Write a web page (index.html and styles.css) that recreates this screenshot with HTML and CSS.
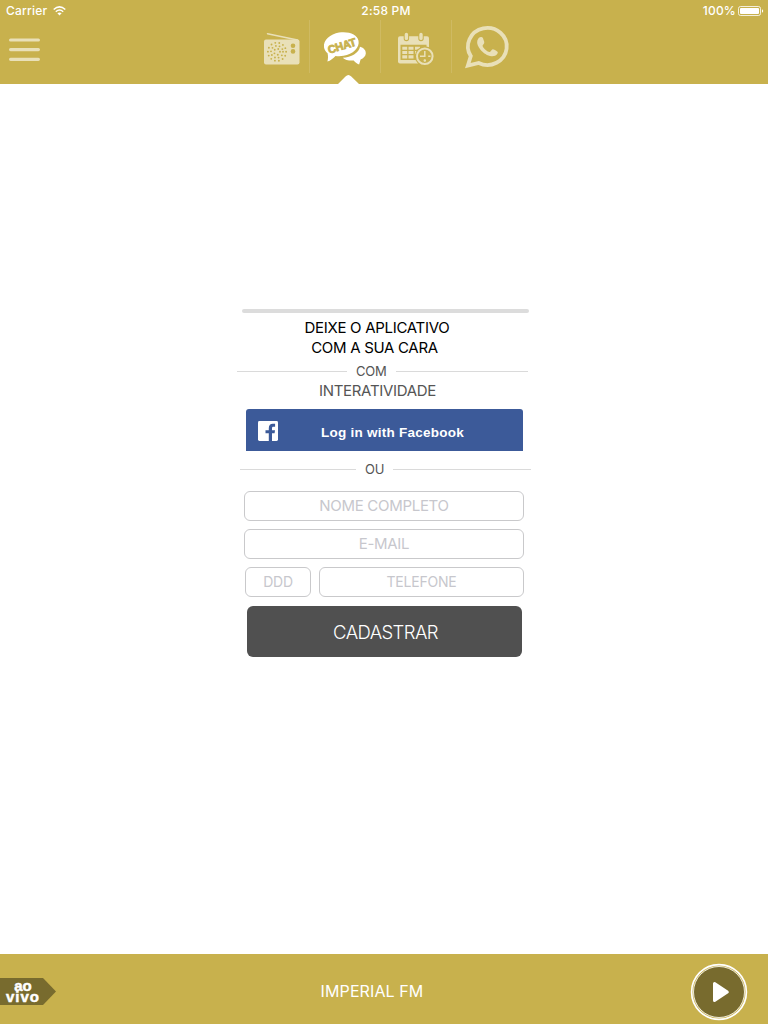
FILE: index.html
```
<!DOCTYPE html>
<html lang="pt-BR">
  <head>
    <meta charset="UTF-8" />
    <meta name="viewport" content="width=device-width, initial-scale=1.0" />
    <title>Imperial FM</title>
    <link rel="stylesheet" href="styles.css">
  </head>
  <body>
    <header class="header">
      <div class="status-bar">
        <div class="status-left">
          <span class="carrier">Carrier</span>
          <svg class="wifi" width="13" height="10" viewBox="0 0 13 10">
            <path d="M.7 3.5Q6.5-1.8 12.3 3.5M2.8 5.7Q6.5 2.4 10.2 5.7" fill="none" stroke="#fff" stroke-width="1.5" />
            <path d="M4.4 7.3Q6.5 5.5 8.6 7.3L6.5 9.4Z" fill="#fff" />
          </svg>
        </div>
        <span class="clock">2:58 PM</span>
        <div class="status-right">
          <span class="percent">100%</span>
          <svg width="26" height="10" viewBox="0 0 26 10">
            <rect x=".5" y=".5" width="22" height="9" rx="2" fill="none" stroke="#fff" stroke-opacity=".8" />
            <rect x="2" y="2" width="19" height="6" rx="1" fill="#fff" />
            <path d="M24 3.2q1.2.5 1.2 1.8t-1.2 1.8z" fill="#fff" />
          </svg>
        </div>
      </div>
      <div class="nav">
        <button class="menu" aria-label="Menu">
          <svg width="31" height="24" viewBox="0 0 31 24">
            <path d="M1.6 2h27.8M1.6 11.6h27.8M1.6 21.3h27.8" stroke="#e9e0b8" stroke-width="3.2" stroke-linecap="round" />
          </svg>
        </button>
        <nav class="tabs">
          <a class="tab" href="#">
            <svg width="70" height="64" viewBox="0 0 70 64">
              <path d="M28.5 13.7L58.5 20" stroke="#e9e0b8" stroke-width="1.5" stroke-linecap="round" />
              <rect x="25" y="19.5" width="35.5" height="25" rx="2" fill="#e9e0b8" />
              <g fill="none" stroke="#c8b14d" stroke-width="1.9" stroke-linecap="round">
                <circle cx="38" cy="31.8" r="3" stroke-dasharray="0 3.77" />
                <circle cx="38" cy="31.8" r="6" stroke-dasharray="0 3.77" />
                <circle cx="38" cy="31.8" r="9.1" stroke-dasharray="0 4.084" />
              </g>
              <g fill="#c8b14d">
                <circle cx="54" cy="25.7" r="2.3" />
                <circle cx="54" cy="31.4" r="2.3" />
              </g>
            </svg>
          </a>
          <a class="tab active" href="#">
            <svg width="70" height="64" viewBox="0 0 70 64">
              <path d="M50 26.7c3.9 1 6 3.8 5.8 6.8-.2 2.8-2.3 4.9-5.2 5.9-.6 1.7-.8 3-1.5 5-2.4-.7-4-2.1-5.4-3.9-4.8.3-8.7-.6-11-2.8 8.4-.4 16.3-4.8 17.3-11z" fill="#fff" />
              <path d="M29 12.6c9.9-1.5 18.3 1.9 19.5 8.1 1.4 6.9-5.5 13.4-15 15.1-3 .5-5.5.5-8 .1-2.3 2.4-4.9 4.6-8.1 5.7.8-3.2.8-5.3.2-8.4-2-1.5-3.2-3.6-3.6-6-.9-6.9 6.3-13.2 15-14.6z" fill="#fff" />
              <text class="chat-word" x="31.6" y="29.8" text-anchor="middle" textLength="29" lengthAdjust="spacing" transform="rotate(-17 31.6 24.6)">CHAT</text>
              <path d="M28 64L35.5 56.6Q38.4 53.4 41.3 56.6L49 64z" fill="#fff" />
            </svg>
          </a>
          <a class="tab" href="#">
            <svg width="70" height="64" viewBox="0 0 70 64">
              <rect x="17" y="16.2" width="31" height="27.3" rx="2" fill="#e9e0b8" />
              <path d="M19.500 24.800h26V38q0 2-2 2h-24z" fill="#c8b14d" />
              <g stroke-linecap="round">
                <path d="M25.4 15v3.5M40 15v3.5" stroke="#c8b14d" stroke-width="5.4" />
                <path d="M25.4 14.4v4M40 14.4v4" stroke="#e9e0b8" stroke-width="3.4" />
              </g>
              <path d="M21.3 26.7h4.9v3.1h-4.9zM27.5 26.7h5v3.1h-5zM34 26.7h5v3.1h-5zM21.3 31h4.9v3.1h-4.9zM27.5 31h5v3.1h-5zM34 31h4v3.1h-4zM21.3 35.3h4.9v3.1h-4.9zM27.5 35.3h5v3.1h-5z" fill="#e9e0b8" />
              <circle cx="43.8" cy="36.2" r="10" fill="#c8b14d" />
              <circle cx="43.8" cy="36.2" r="7.8" fill="#c8b14d" stroke="#e9e0b8" stroke-width="2" />
              <path d="M43.8 31v5.2H39M43.8 39.3v2.4M42.6 40.5h2.4M47.2 36.2h2.3" fill="none" stroke="#e9e0b8" stroke-width="1.5" />
            </svg>
          </a>
          <a class="tab" href="#">
            <svg width="70" height="64" viewBox="0 0 70 64">
              <path d="M15.8 45.7l3-9.6A19.4 18.5 0 1 1 26.7 43z" fill="none" stroke="#e9e0b8" stroke-width="3.8" />
              <path d="M25.3 20.8c.7-2.1 2-3.8 4-3.7 1.4.1 1.7 1.2 2.2 2.6.5 1.3 1.1 2.5.6 3.5-.4 1-1.3 1.5-1.5 2.2-.2 1.1 1.3 2.8 2.5 4s3.6 2.7 4.7 2.5c.9-.2 1.6-2.2 2.6-2.5 1.2-.3 3.5 1.2 4.8 2 .9.6.7 1.5 0 2.6-1.2 1.8-3.4 2.4-5.7 2.2-4-.4-8.3-3.2-11-6.5-2.2-2.8-4-6-3.2-8.9z" fill="#e9e0b8" />
            </svg>
          </a>
        </nav>
      </div>
    </header>

    <main class="main">
      <form class="form">
        <div class="bar"></div>
        <h1 class="title"><span class="line-a">DEIXE O APLICATIVO</span><span class="line-b">COM A SUA CARA</span></h1>
        <div class="divider divider-com"><span>COM</span></div>
        <p class="subtitle">INTERATIVIDADE</p>
        <button type="button" class="facebook">
          <svg width="20" height="20" viewBox="0 0 20 20">
            <rect width="20" height="20" rx="1.4" fill="#fff" />
            <path d="M10.8 20v-7.700H7.500V9.200h3.300V7c0-2.700 1.600-4.200 4-4.200h2.300v2.900h-1.600c-1.300 0-1.500.6-1.500 1.500v2h3l-.4 3.100H14V20z" fill="#3c5a99" />
          </svg>
          <span>Log in with Facebook</span>
        </button>
        <div class="divider divider-ou"><span>OU</span></div>
        <input class="field" type="text" placeholder="NOME COMPLETO" />
        <input class="field email" type="text" placeholder="E-MAIL" />
        <div class="phone-row">
          <input class="field ddd" type="text" placeholder="DDD" />
          <input class="field phone" type="text" placeholder="TELEFONE" />
        </div>
        <button type="button" class="submit">CADASTRAR</button>
      </form>
    </main>

    <footer class="player">
      <div class="live">ao<br /><span class="vivo">vivo</span></div>
      <span class="station">IMPERIAL FM</span>
      <button class="play" aria-label="Play">
        <svg width="58" height="58" viewBox="0 0 58 58">
          <circle cx="29" cy="29" r="27.4" fill="#c8b14d" stroke="#fff" stroke-width="1.7" />
          <circle cx="29" cy="29" r="25.5" fill="#786b2e" stroke="#fff" stroke-width=".8" />
          <path d="M24.5 20.5v17L37.3 29z" fill="#fff" stroke="#fff" stroke-width="3" stroke-linejoin="round" />
        </svg>
      </button>
    </footer>
  </body>
</html>
```
FILE: styles.css
```
* {
  box-sizing: border-box;
  margin: 0;
  padding: 0;
}
body {
  font-family: Inter, "Liberation Sans", sans-serif;
  background: #fff;
  height: 100vh;
  display: flex;
  flex-direction: column;
  overflow: hidden;
}
button {
  border: none;
  background: none;
  font-family: inherit;
  cursor: pointer;
}
svg {
  display: block;
}
.header {
  height: 84px;
  background: #c8b14d;
}
.status-bar {
  height: 20px;
  display: grid;
  grid-template-columns: 1fr auto 1fr;
  align-items: center;
  padding: 1px 4px 0 6px;
  color: #fff;
  font-size: 12px;
  font-weight: 500;
  letter-spacing: 0.2px;
}
.clock {
  padding-left: 2px;
}
.status-left,
.status-right {
  display: flex;
  align-items: center;
}
.status-left {
  gap: 6px;
}
.status-right {
  justify-content: flex-end;
  gap: 2px;
}
.nav {
  height: 64px;
  display: flex;
}
.menu {
  width: 239px;
  padding: 18px 0 0 9px;
  display: flex;
  align-items: flex-start;
}
.tabs {
  display: flex;
}
.tab {
  width: 71px;
  background: linear-gradient(#cfba62, #cfba62) right top / 1px 53px no-repeat;
}
.tab:last-child {
  background: none;
}
.chat-word {
  font-family: "Liberation Sans", sans-serif;
  font-size: 11px;
  font-weight: bold;
  fill: #c8b14d;
  stroke: #c8b14d;
  stroke-width: 0.8px;
}
.main {
  flex: 1;
  display: flex;
  justify-content: center;
}
.form {
  width: 294px;
  padding-top: 225px;
}
.bar {
  width: 287px;
  height: 4px;
  margin-left: 5px;
  border-radius: 2px;
  background: #dcdcdc;
}
.title {
  width: 280px;
  padding-top: 5px;
  font-size: 15px;
  font-weight: 400;
  line-height: 20px;
  letter-spacing: -0.3px;
  text-align: center;
  color: #000;
}
.title span {
  display: block;
}
.line-b {
  margin-left: -5px;
}
.divider {
  display: flex;
  align-items: center;
  gap: 9px;
  font-size: 13px;
  line-height: 20px;
  letter-spacing: -0.2px;
  color: #555;
}
.divider::before,
.divider::after {
  content: "";
  height: 1px;
  background: #dadada;
}
.divider::after {
  flex: 1;
}
.divider-com {
  width: 291px;
  margin-top: 3px;
}
.divider-com::before {
  width: 110px;
}
.divider-ou {
  margin: 8px 0 12px 3px;
}
.divider-ou::before {
  width: 116px;
}
.subtitle {
  width: 281px;
  height: 28px;
  font-size: 15px;
  line-height: 19px;
  letter-spacing: -0.3px;
  text-align: center;
  color: #555;
}
.facebook {
  width: 277px;
  height: 42px;
  margin-left: 9px;
  padding: 2px 59px 0 12px;
  display: flex;
  align-items: center;
  justify-content: space-between;
  border-radius: 3px 3px 0 0;
  background: #3c5a99;
  color: #fff;
  font-family: "Liberation Sans", sans-serif;
  font-size: 13.5px;
  font-weight: bold;
  letter-spacing: 0.25px;
}
.facebook span {
  padding-top: 2px;
}
.field {
  display: block;
  width: 280px;
  height: 30px;
  margin: 0 0 8px 7px;
  padding-bottom: 2px;
  border: 1px solid #c9c9cb;
  border-radius: 6px;
  font-family: inherit;
  font-size: 15px;
  letter-spacing: -0.3px;
  text-align: center;
}
.field::placeholder {
  color: #c7c7cd;
}
.phone-row {
  display: flex;
  gap: 8px;
  margin: 0 0 9px 8px;
}
.phone-row .field {
  margin: 0;
  font-size: 14px;
  letter-spacing: -0.2px;
}
.phone-row .ddd {
  width: 66px;
}
.phone-row .phone {
  width: 205px;
}
.submit {
  display: block;
  width: 275px;
  height: 51px;
  margin-left: 10px;
  padding: 1px 0 0 2px;
  border-radius: 6px;
  background: #505050;
  color: #fff;
  font-size: 18.5px;
  font-weight: 300;
  letter-spacing: -0.6px;
}
.player {
  height: 70px;
  display: grid;
  grid-template-columns: 56px 1fr 78px;
  align-items: center;
  background: #c8b14d;
}
.live {
  height: 27px;
  margin-top: 5px;
  padding: 2px 10px 0 0;
  background: #786b2e;
  clip-path: polygon(0 0, 43px 0, 100% 50%, 43px 100%, 0 100%);
  color: #fff;
  font-family: "Liberation Sans", sans-serif;
  font-size: 15px;
  font-weight: bold;
  line-height: 11px;
  text-align: center;
  -webkit-text-stroke: 0.5px #fff;
}
.vivo {
  letter-spacing: 1px;
}
.station {
  padding: 4px 2px 0 0;
  color: #fff;
  font-size: 16px;
  letter-spacing: 0.1px;
  text-align: center;
}
.play {
  padding-top: 5px;
}
```
